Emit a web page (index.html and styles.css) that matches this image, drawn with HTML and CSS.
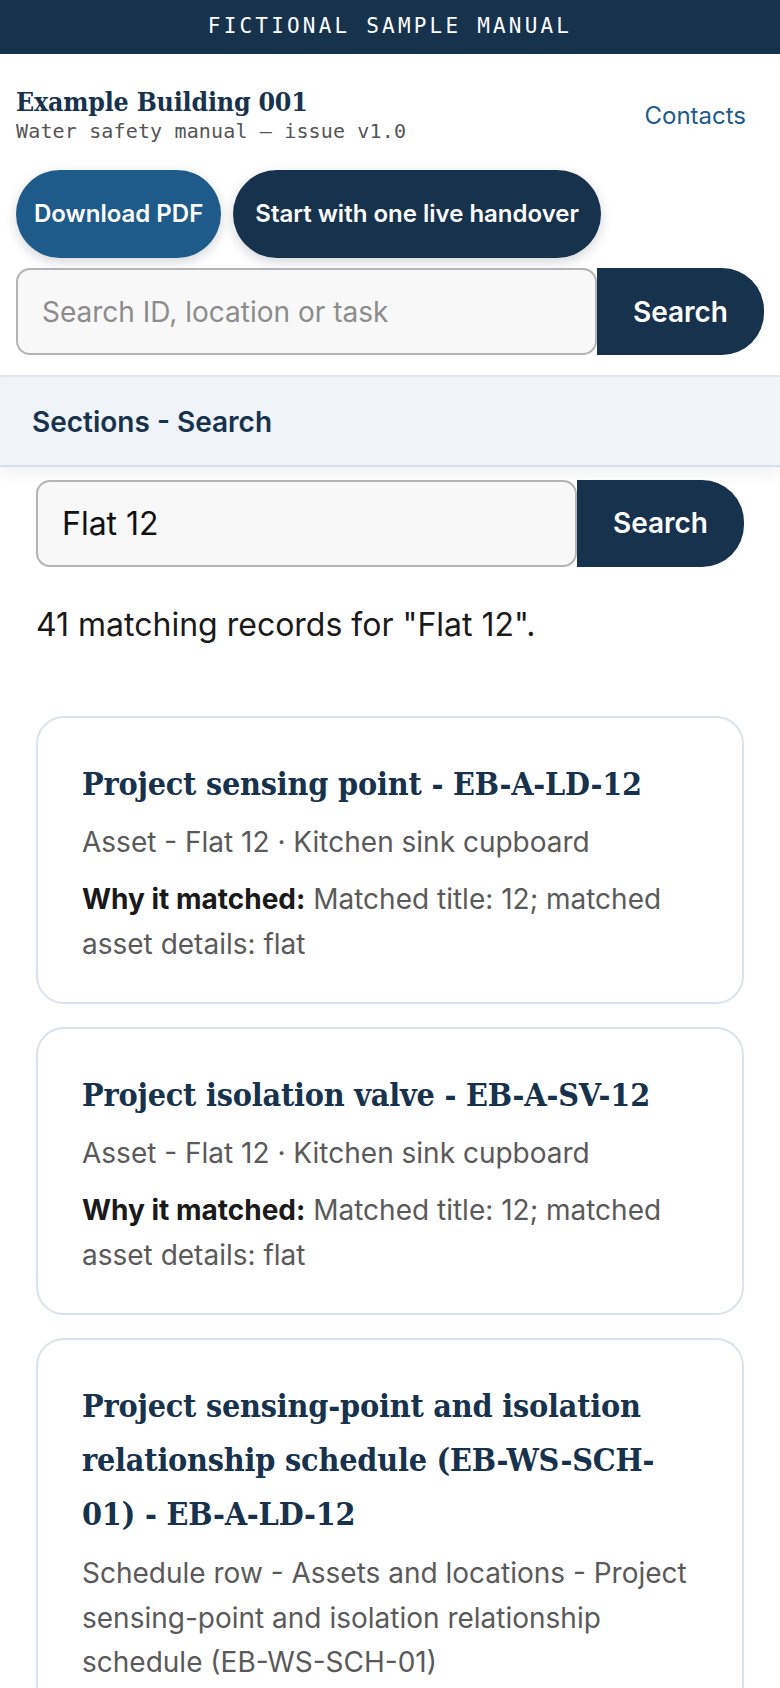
FILE: index.html
```
<!DOCTYPE html>
<html lang="en">
<head>
<meta charset="utf-8">
<title>Example Building 001 - Search</title>
<link rel="stylesheet" href="styles.css">
</head>
<body>
<div class="topbar">FICTIONAL SAMPLE MANUAL</div>
<header class="site-header">
  <div class="brand-row">
    <div class="brand">
      <div class="brand-title">Example Building 001</div>
      <div class="brand-sub">Water safety manual – issue v1.0</div>
    </div>
    <a class="contacts" href="#">Contacts</a>
  </div>
  <div class="actions">
    <a class="btn btn-blue" href="#">Download PDF</a>
    <a class="btn btn-navy" href="#">Start with one live handover</a>
  </div>
  <form class="search search-header">
    <input class="search-input" type="text" placeholder="Search ID, location or task">
    <button class="search-btn" type="button">Search</button>
  </form>
</header>
<nav class="section-bar">Sections - Search</nav>
<main class="content">
  <form class="search search-page">
    <input class="search-input" type="text" value="Flat 12">
    <button class="search-btn" type="button">Search</button>
  </form>
  <p class="result-count">41 matching records for "Flat 12".</p>
  <div class="results">
    <article class="card">
      <h2 class="card-title">Project sensing point - EB-A-LD-12</h2>
      <p class="card-meta">Asset - Flat 12 · Kitchen sink cupboard</p>
      <p class="card-why"><strong>Why it matched:</strong> Matched title: 12; matched asset details: flat</p>
    </article>
    <article class="card">
      <h2 class="card-title">Project isolation valve - EB-A-SV-12</h2>
      <p class="card-meta">Asset - Flat 12 · Kitchen sink cupboard</p>
      <p class="card-why"><strong>Why it matched:</strong> Matched title: 12; matched asset details: flat</p>
    </article>
    <article class="card">
      <h2 class="card-title">Project sensing-point and isolation relationship schedule (EB-WS-SCH-01) - EB-A-LD-12</h2>
      <p class="card-meta">Schedule row - Assets and locations - Project sensing-point and isolation relationship schedule (EB-WS-SCH-01)</p>
      <p class="card-why"><strong>Why it matched:</strong> Matched title: 12; matched asset details: flat</p>
    </article>
  </div>
</main>
</body>
</html>
```
FILE: styles.css
```
* {
  box-sizing: border-box;
}

html, body {
  margin: 0;
  padding: 0;
  background: #ffffff;
}

body {
  font-family: Inter, "Noto Sans", sans-serif;
  font-size: 32px;
  line-height: 1.6;
  color: #1a1a1a;
}

.topbar {
  height: 54px;
  background: #17324c;
  color: #ffffff;
  font-family: "DejaVu Sans Mono", "Liberation Mono", monospace;
  font-size: 21px;
  letter-spacing: 3.2px;
  display: flex;
  align-items: center;
  justify-content: center;
}

.site-header {
  padding: 31px 16px 20px;
  border-bottom: 2px solid #dfe7ee;
}

.brand-row {
  display: flex;
  align-items: center;
  justify-content: space-between;
}

.brand-title {
  font-family: "DejaVu Serif", "Liberation Serif", serif;
  font-stretch: condensed;
  font-weight: 700;
  font-size: 26.5px;
  line-height: 33.6px;
  letter-spacing: -0.2px;
  color: #17324d;
}

.brand-sub {
  font-family: "DejaVu Sans Mono", "Liberation Mono", monospace;
  font-size: 20px;
  line-height: 24px;
  letter-spacing: 0.15px;
  color: #555555;
}

.contacts {
  font-size: 24px;
  line-height: 1.6;
  color: #1f5b8c;
  text-decoration: none;
  padding: 4px 18px 0;
}

.actions {
  display: flex;
  gap: 12px;
  margin-top: 27px;
}

.btn {
  display: inline-block;
  padding: 25px 18px;
  border-radius: 44px;
  font-size: 24px;
  font-weight: 600;
  line-height: 38.4px;
  color: #ffffff;
  text-decoration: none;
  box-shadow: 0 4px 12px rgba(15, 30, 50, 0.18);
}

.btn-blue {
  background: #1f5b8a;
}

.btn-navy {
  background: #17324d;
  padding-left: 22px;
  padding-right: 22px;
}

.search {
  display: flex;
}

.search-header {
  margin-top: 10px;
}

.search-input {
  flex: 1;
  min-width: 0;
  height: 87px;
  padding: 0 24px;
  border: 2px solid #b4b4b6;
  border-radius: 14px;
  background: #f8f8f8;
  font-family: Inter, "Noto Sans", sans-serif;
  font-size: 28px;
  color: #111111;
  outline: none;
}

.search-page .search-input {
  font-size: 32px;
}

.search-input::placeholder {
  color: #8c8c8c;
}

.search-btn {
  flex: none;
  height: 87px;
  padding: 0 36px;
  border: none;
  border-radius: 0 42px 42px 0;
  background: #17324d;
  color: #ffffff;
  font-family: Inter, "Noto Sans", sans-serif;
  font-size: 28px;
  font-weight: 600;
}

.section-bar {
  background: #f0f4f8;
  border-bottom: 2px solid #d6dfe8;
  padding: 23px 32px 20px;
  font-size: 28px;
  font-weight: 600;
  line-height: 1.6;
  color: #17324d;
  box-shadow: 0 8px 14px rgba(20, 40, 60, 0.06);
}

.content {
  padding: 13px 36px 40px;
}

.result-count {
  margin: 32px 0 0;
  font-size: 32px;
  line-height: 1.6;
  color: #1a1a1a;
}

.results {
  margin-top: 66px;
  display: flex;
  flex-direction: column;
  gap: 23px;
}

.card {
  border: 2px solid #d9e3ec;
  border-radius: 28px;
  padding: 39px 44px 35px;
  background: #ffffff;
}

.card-title {
  margin: 0;
  font-family: "DejaVu Serif", "Liberation Serif", serif;
  font-stretch: condensed;
  font-weight: 700;
  font-size: 32px;
  line-height: 54.4px;
  letter-spacing: -0.2px;
  color: #17324d;
}

.card-meta {
  margin: 9px 0 0;
  font-size: 28px;
  line-height: 44.8px;
  color: #5a5a5a;
}

.card-why {
  margin: 12px 0 0;
  font-size: 28px;
  line-height: 44.8px;
  color: #5a5a5a;
}

.card-why strong {
  color: #1a1a1a;
  font-weight: 700;
}
```
